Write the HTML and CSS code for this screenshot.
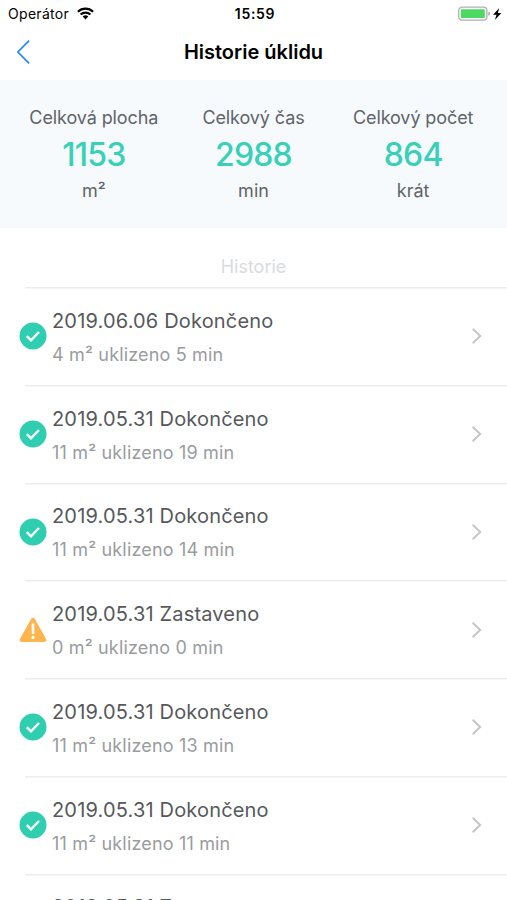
FILE: index.html
```html
<!doctype html>
<html lang="cs">
<head>
    <meta charset="utf-8">
    <meta name="viewport" content="width=device-width, initial-scale=1">
    <title>Historie úklidu</title>
    <link rel="stylesheet" href="styles.css">
</head>
<body>
    <!-- Shared icons -->
    <svg class="sprite">
        <symbol id="icon-done" viewBox="0 0 28 28">
            <circle cx="14" cy="14" r="13.5" fill="#30ceb0"/>
            <path d="M7.8 14.2l4.2 4.2L20 10" fill="none" stroke="#fff" stroke-width="2.4"/>
        </symbol>
        <symbol id="icon-warning" viewBox="0 0 28 28">
            <path d="M14 3.8L25.3 23.9H2.7z" fill="#ffb54d" stroke="#ffb54d" stroke-width="4" stroke-linejoin="round"/>
            <path d="M14 8.6v8.4" fill="none" stroke="#fff" stroke-width="2.6" stroke-linecap="round"/>
            <circle cx="14" cy="21.4" r="1.7" fill="#fff"/>
        </symbol>
        <symbol id="icon-next" viewBox="0 0 12 18">
            <path d="M1.7 1.8L9.2 9l-7.5 7.2" fill="none" stroke="#c6c6c8" stroke-width="2"/>
        </symbol>
    </svg>

    <div class="status-bar">
        <div class="carrier">
            <span class="carrier-name">Operátor</span>
            <svg class="wifi" viewBox="0 0 17 13">
                <path d="M.9 4.7a11 11 0 0 1 15.2 0M3.6 7.5a7.2 7.2 0 0 1 9.8 0" fill="none" stroke="#000" stroke-width="2.1"/>
                <path d="M8.5 12.4L5.7 9.6a4 4 0 0 1 5.6 0z"/>
            </svg>
        </div>
        <div class="clock">15:59</div>
        <div class="battery">
            <svg class="battery-icon" viewBox="0 0 44 16">
                <rect x=".7" y="1.2" width="28.2" height="13" rx="3.4" fill="#fff" stroke="#b0b0b0" stroke-width="1.3"/>
                <rect x="2.8" y="3.3" width="24" height="8.8" rx="1.2" fill="#4cd964"/>
                <path d="M30.3 5.7q1.7.5 1.7 2t-1.7 2z" fill="#a0a0a0"/>
                <path d="M41.3 1.9l-6.2 6.8h3.4l-1.6 5.3 6.4-7h-3.5z"/>
            </svg>
        </div>
    </div>

    <div class="nav-bar">
        <svg class="back" viewBox="0 0 15 26">
            <path d="M13.1 1.7L1.9 13l11.2 11.3" fill="none" stroke="#2585f5" stroke-width="1.7"/>
        </svg>
        <h1 class="nav-title">Historie úklidu</h1>
    </div>

    <div class="summary">
        <div class="stat">
            <div class="stat-label">Celková plocha</div>
            <div class="stat-value">1153</div>
            <div class="stat-unit">m²</div>
        </div>
        <div class="stat">
            <div class="stat-label">Celkový čas</div>
            <div class="stat-value">2988</div>
            <div class="stat-unit">min</div>
        </div>
        <div class="stat">
            <div class="stat-label">Celkový počet</div>
            <div class="stat-value">864</div>
            <div class="stat-unit">krát</div>
        </div>
    </div>

    <h2 class="history-title">Historie</h2>
    <ul class="history">
        <li class="entry">
            <svg class="entry-icon"><use href="#icon-done"/></svg>
            <div class="entry-text">
                <div class="entry-title">2019.06.06 Dokončeno</div>
                <div class="entry-subtext">4 m² uklizeno 5 min</div>
            </div>
            <svg class="entry-next"><use href="#icon-next"/></svg>
        </li>
        <li class="entry">
            <svg class="entry-icon"><use href="#icon-done"/></svg>
            <div class="entry-text">
                <div class="entry-title">2019.05.31 Dokončeno</div>
                <div class="entry-subtext">11 m² uklizeno 19 min</div>
            </div>
            <svg class="entry-next"><use href="#icon-next"/></svg>
        </li>
        <li class="entry">
            <svg class="entry-icon"><use href="#icon-done"/></svg>
            <div class="entry-text">
                <div class="entry-title">2019.05.31 Dokončeno</div>
                <div class="entry-subtext">11 m² uklizeno 14 min</div>
            </div>
            <svg class="entry-next"><use href="#icon-next"/></svg>
        </li>
        <li class="entry">
            <svg class="entry-icon"><use href="#icon-warning"/></svg>
            <div class="entry-text">
                <div class="entry-title">2019.05.31 Zastaveno</div>
                <div class="entry-subtext">0 m² uklizeno 0 min</div>
            </div>
            <svg class="entry-next"><use href="#icon-next"/></svg>
        </li>
        <li class="entry">
            <svg class="entry-icon"><use href="#icon-done"/></svg>
            <div class="entry-text">
                <div class="entry-title">2019.05.31 Dokončeno</div>
                <div class="entry-subtext">11 m² uklizeno 13 min</div>
            </div>
            <svg class="entry-next"><use href="#icon-next"/></svg>
        </li>
        <li class="entry">
            <svg class="entry-icon"><use href="#icon-done"/></svg>
            <div class="entry-text">
                <div class="entry-title">2019.05.31 Dokončeno</div>
                <div class="entry-subtext">11 m² uklizeno 11 min</div>
            </div>
            <svg class="entry-next"><use href="#icon-next"/></svg>
        </li>
        <li class="entry">
            <div class="entry-text">
                <div class="entry-title">2019.05.31 Zastaveno</div>
            </div>
        </li>
    </ul>
</body>
</html>
```
FILE: styles.css
```css
* {
    box-sizing: border-box;
}

body {
    font-family: Inter, "Liberation Sans", sans-serif;
    margin: 0;
    height: 100vh;
    overflow: hidden;
    display: flex;
    flex-direction: column;
    background-color: #fff;
    color: #000;
}

.sprite {
    display: none;
}

.status-bar {
    flex: none;
    height: 27px;
    padding: 0 5px 0 8px;
    display: grid;
    grid-template-columns: 1fr auto 1fr;
    align-items: center;
    font-size: 14px;
}

.carrier {
    display: flex;
    align-items: center;
    gap: 8px;
}

.carrier-name {
    letter-spacing: 0.3px;
}

.wifi {
    width: 17px;
    height: 13px;
}

.clock {
    font-weight: 600;
    letter-spacing: 0.7px;
}

.battery {
    display: flex;
    justify-content: flex-end;
}

.battery-icon {
    width: 44px;
    height: 16px;
}

.nav-bar {
    flex: none;
    height: 53px;
    padding: 0 16px 4px;
    display: grid;
    grid-template-columns: 1fr auto 1fr;
    align-items: center;
}

.back {
    width: 15px;
    height: 26px;
}

.nav-title {
    margin: 0;
    font-size: 20px;
    font-weight: 600;
}

.summary {
    flex: none;
    height: 148px;
    padding: 25px 14px 0;
    display: grid;
    grid-template-columns: repeat(3, 1fr);
    background-color: #f6fafd;
    color: #606468;
    text-align: center;
}

.stat-label,
.stat-unit {
    font-size: 18px;
    line-height: 26px;
}

.stat-label {
    letter-spacing: -0.1px;
}

.stat-value {
    font-size: 32px;
    font-weight: 500;
    line-height: 47px;
    letter-spacing: -0.8px;
    color: #38d0b6;
}

.history-title {
    flex: none;
    height: 59px;
    margin: 0;
    padding-top: 26px;
    font-size: 18px;
    font-weight: 400;
    line-height: 26px;
    text-align: center;
    color: #d9dbde;
}

.history {
    flex: none;
    margin: 0;
    padding: 0;
    list-style-type: none;
}

.entry {
    height: 97.75px;
    padding: 1px 24px 0 19px;
    display: flex;
    align-items: center;
    background: linear-gradient(#ededee, #ededee) 25px 0 / 100% 1.5px no-repeat;
}

.entry-icon {
    flex: none;
    width: 28px;
    height: 28px;
    margin-right: 5px;
}

.entry-text {
    flex: 1;
    height: 65px;
}

.entry:last-child .entry-text {
    margin-left: 33px;
}

.entry-title {
    font-size: 20px;
    line-height: 34px;
    letter-spacing: 0.17px;
    color: #56595c;
}

.entry-subtext {
    font-size: 18px;
    line-height: 33px;
    letter-spacing: 0.17px;
    color: #999c9f;
}

.entry-next {
    flex: none;
    width: 12px;
    height: 18px;
}
```
